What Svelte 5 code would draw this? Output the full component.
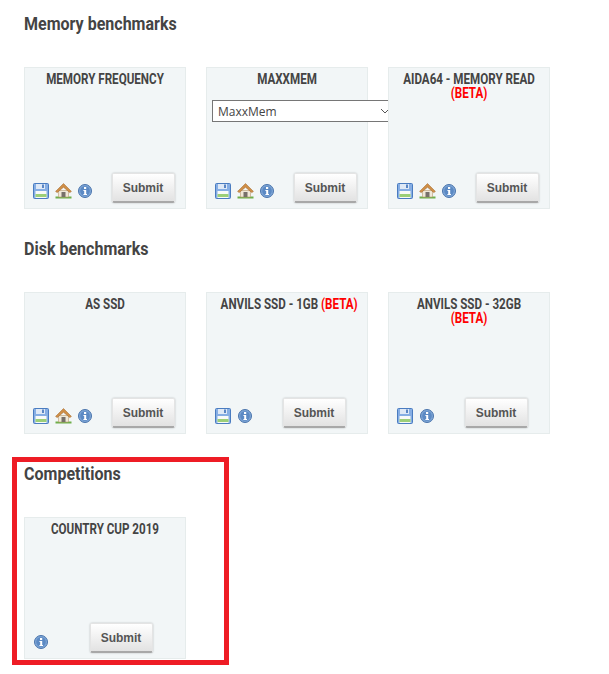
<script>
  const sections = [
    {
      title: "Memory benchmarks",
      cards: [
        { name: "MEMORY FREQUENCY", save: true, home: true },
        { name: "MAXXMEM", save: true, home: true, options: ["MaxxMem"] },
        { name: "AIDA64 - MEMORY READ", beta: true, wrap: true, save: true, home: true }
      ]
    },
    {
      title: "Disk benchmarks",
      cards: [
        { name: "AS SSD", save: true, home: true },
        { name: "ANVILS SSD - 1GB", beta: true, save: true },
        { name: "ANVILS SSD - 32GB", beta: true, wrap: true, save: true }
      ]
    },
    {
      title: "Competitions",
      cards: [{ name: "COUNTRY CUP 2019" }]
    }
  ];
</script>

<main class="page">
  {#each sections as section}
    <section class="section">
      <h2>{section.title}</h2>
      <div class="cards">
        {#each section.cards as card}
          <form class="card" onsubmit={(e) => e.preventDefault()}>
            <h3>
              {card.name}
              {#if card.beta}
                {#if card.wrap}<br />{/if}
                <span class="beta">(BETA)</span>
              {/if}
            </h3>
            {#if card.options}
              <select>
                {#each card.options as option}
                  <option>{option}</option>
                {/each}
              </select>
            {/if}
            <div class="actions">
              <div class="icons">
                {#if card.save}
                  <svg width="16" height="16" viewBox="0 0 16 16" aria-label="Save">
                    <rect x="0.5" y="0.5" width="15" height="15" rx="1" fill="#86aee4" stroke="#4a7cc0" />
                    <rect x="3" y="1" width="9" height="5" fill="#dfe9f6" />
                    <rect x="9" y="1.5" width="2" height="3.5" fill="#5a86c4" />
                    <rect x="2.5" y="8" width="11" height="7" fill="#f8faf8" />
                    <rect x="2.5" y="11" width="11" height="3" fill="#9ccf78" />
                  </svg>
                {/if}
                {#if card.home}
                  <svg class="home" width="17" height="16" viewBox="0 0 17 16" aria-label="Home">
                    <rect x="0.5" y="13.5" width="16" height="2" fill="#6fae4a" />
                    <path d="M3.5 7.5h10v6.5h-10z" fill="#f0e8d8" stroke="#b89a70" stroke-width="0.6" />
                    <rect x="6.5" y="9" width="4" height="5" fill="#77706a" />
                    <path d="M0.6 8.4 8.5 0.6l7.9 7.8-1.6 1.2L8.5 4.2 2.2 9.6z" fill="#cf8f48" stroke="#a86d30" stroke-width="0.6" />
                  </svg>
                {/if}
                <svg class="info" width="14" height="14" viewBox="0 0 14 14" aria-label="Info">
                  <circle cx="7" cy="7" r="6.5" fill="#7ea6d6" stroke="#4a74ac" />
                  <circle cx="7" cy="7" r="4.8" fill="#5c8ac4" />
                  <rect x="6" y="3" width="2.2" height="2" fill="#fff" />
                  <path d="M5.4 6h2.8v4h0.8v1H5.4v-1h0.8V7H5.4z" fill="#fff" />
                </svg>
              </div>
              <div class="submit-cell">
                <button type="submit">Submit</button>
              </div>
            </div>
          </form>
        {/each}
      </div>
    </section>
  {/each}
  <div class="highlight"></div>
</main>

<style>
  :global(body) {
    background: #fff;
  }

  .page {
    position: relative;
    height: 674px;
    overflow: hidden;
    padding: 14px 0 0 24px;
    box-sizing: border-box;
    font-family: Roboto, sans-serif;
    color: #444;
  }

  .section {
    margin-bottom: 30px;
  }

  /* no condensed face installed, so the widths are narrowed by hand */
  h2 {
    margin: 0 0 33px;
    font-size: 18px;
    line-height: 20px;
    font-weight: 700;
    color: #444;
    transform: scaleX(0.89);
    transform-origin: left;
  }

  .cards {
    display: grid;
    grid-template-columns: repeat(3, 162px);
    gap: 20px;
  }

  .card {
    display: flex;
    flex-direction: column;
    box-sizing: border-box;
    height: 142px;
    padding: 4px 0 5px 8px;
    background: #f2f6f7;
    border: 1px solid #e6ecec;
  }

  h3 {
    margin: 0 0 0 -8px;
    font-size: 14px;
    line-height: 14px;
    font-weight: 700;
    text-align: center;
    white-space: nowrap;
    color: #444;
    transform: scaleX(0.83);
  }

  .beta {
    color: #f00;
  }

  select {
    appearance: none;
    width: 182px;
    height: 22px;
    margin: 14px 0 0 -3px;
    padding: 0 0 0 5px;
    flex: none;
    background: #fff url("data:image/svg+xml,%3Csvg xmlns='http://www.w3.org/2000/svg' width='10' height='6'%3E%3Cpath d='M1 1l4 4 4-4' fill='none' stroke='%23555'/%3E%3C/svg%3E") no-repeat right 3px center;
    border: 1px solid #767676;
    border-radius: 0;
    font-family: "Open Sans", sans-serif;
    font-size: 12px;
    color: #444;
  }

  .actions {
    display: flex;
    margin-top: auto;
    align-items: flex-end;
  }

  .icons {
    display: flex;
    align-items: center;
    gap: 6px;
    margin-bottom: 4px;
  }

  .home {
    margin-right: -1px;
  }

  .info {
    margin-left: 1px;
  }

  .submit-cell {
    flex: 1;
    display: flex;
    justify-content: center;
    margin-right: -9px;
  }

  button {
    width: 63px;
    height: 30px;
    padding: 0;
    background: linear-gradient(#fff, #e2e2e2);
    border: 1px solid #e4e4e4;
    border-bottom: 2px solid #a8a8a8;
    border-radius: 2px;
    box-shadow: 0 0 2px rgba(0, 0, 0, 0.25);
    font-family: "Liberation Sans", Arial, sans-serif;
    font-size: 12px;
    font-weight: 700;
    color: #555;
  }

  .highlight {
    position: absolute;
    left: 12px;
    top: 457px;
    width: 217px;
    height: 208px;
    box-sizing: border-box;
    border: 5px solid #ee1c25;
    pointer-events: none;
  }
</style>
